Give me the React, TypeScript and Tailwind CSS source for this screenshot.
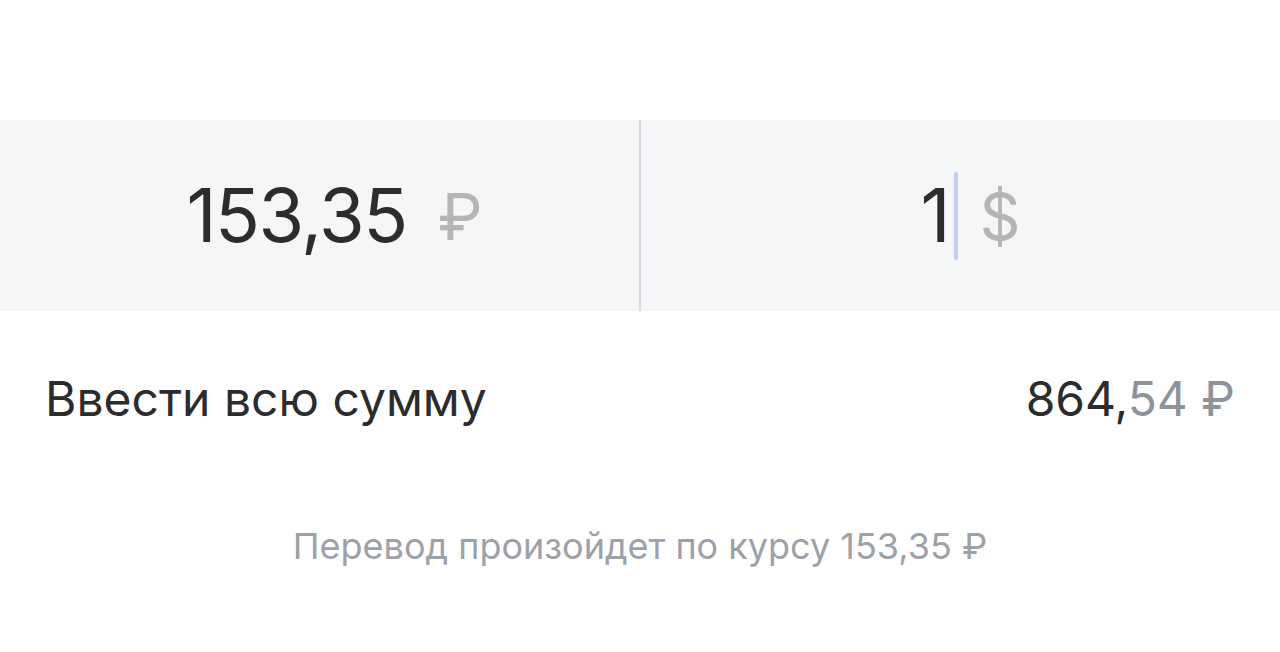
import React from 'react';

const font = { fontFamily: 'Inter, Roboto, "Noto Sans", sans-serif' };

const App: React.FC = () => {
  return (
    <div className="w-[1280px] h-[652px] bg-white overflow-hidden" style={font}>
      <div className="h-[120px]" />

      {/* Amount inputs */}
      <div className="flex h-[191px] bg-[#f5f6f8]">
        <div className="flex-1 flex items-center justify-center border-r-2 border-[#d9dadd]">
          <span className="text-[74px] text-[#2c2c2e] tracking-[-1.5px] pl-[30px]">153,35</span>
          <span className="text-[64px] text-[#b5b5b7] ml-[31px] pt-[2px]">₽</span>
        </div>
        <div className="flex-1 flex items-center justify-center">
          <span className="text-[74px] text-[#2c2c2e] pl-[20px]">1</span>
          <span className="w-[4px] h-[88px] rounded-full bg-[#c3cdf6] ml-[3px]" />
          <span className="text-[64px] text-[#b5b5b7] ml-[22px] pt-[2px]">$</span>
        </div>
      </div>

      {/* Whole amount row */}
      <div className="flex items-center justify-between px-[45px] pt-[52px]">
        <span className="text-[48px] text-[#2c2c2e]">Ввести всю сумму</span>
        <span className="text-[48px]">
          <span className="text-[#2c2c2e]">864,</span>
          <span className="text-[#8e9299]">54 ₽</span>
        </span>
      </div>

      {/* Exchange rate note */}
      <div className="text-center pt-[84px] text-[36px] text-[#9da1a8]">
        Перевод произойдет по курсу 153,35 ₽
      </div>
    </div>
  );
};

export default App;
